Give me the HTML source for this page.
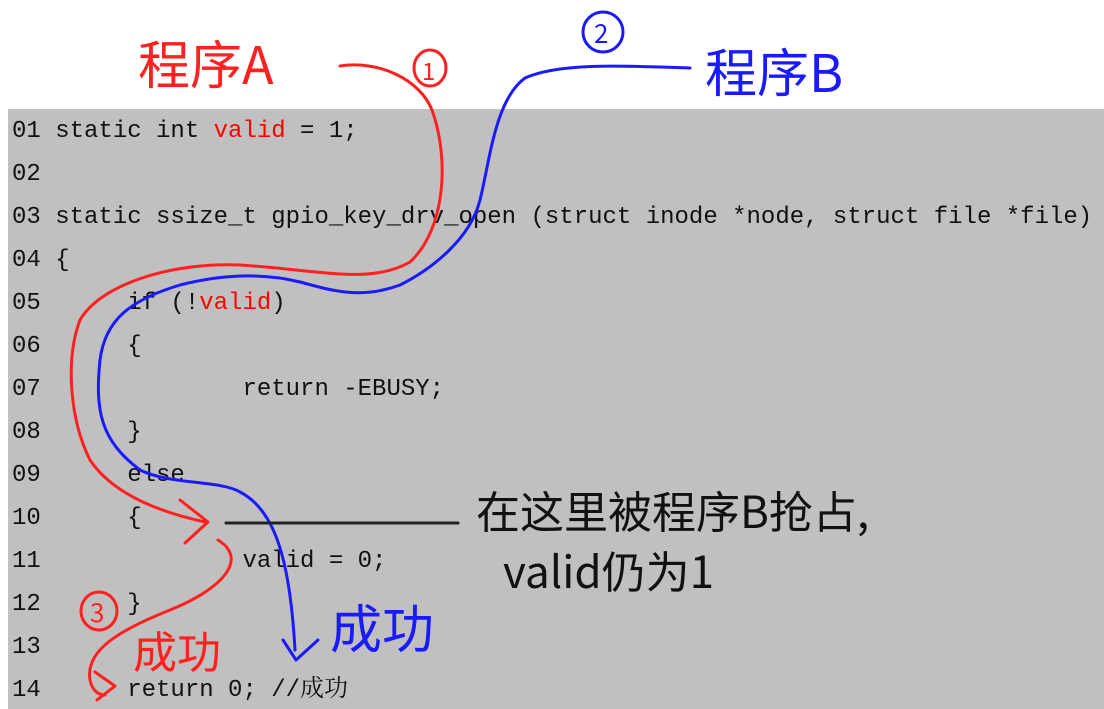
<!DOCTYPE html>
<html><head><meta charset="utf-8"><style>
html,body{margin:0;padding:0;background:#fff;width:1104px;height:709px;overflow:hidden;position:relative}
#box{position:absolute;left:8px;top:109px;width:1096px;height:600px;background:#c0c0c0}
.l{position:absolute;left:12px;font-family:"Liberation Mono","Noto Serif CJK SC",monospace;font-size:24px;color:#111;white-space:pre;line-height:28px}
.r{color:#f00}
svg{position:absolute;left:0;top:0}
</style></head><body>
<div id="box"></div>
<div class="l" style="top:118px">01 static int <span class="r">valid</span> = 1;</div>
<div class="l" style="top:161px">02</div>
<div class="l" style="top:204px">03 static ssize_t gpio_key_drv_open (struct inode *node, struct file *file)</div>
<div class="l" style="top:247px">04 {</div>
<div class="l" style="top:290px">05      if (!<span class="r">valid</span>)</div>
<div class="l" style="top:333px">06      {</div>
<div class="l" style="top:376px">07              return -EBUSY;</div>
<div class="l" style="top:419px">08      }</div>
<div class="l" style="top:462px">09      else</div>
<div class="l" style="top:505px">10      {</div>
<div class="l" style="top:548px">11              valid = 0;</div>
<div class="l" style="top:591px">12      }</div>
<div class="l" style="top:634px">13</div>
<div class="l" style="top:677px">14      return 0; //成功</div>
<svg width="1104" height="709" viewBox="0 0 1104 709" fill="none" stroke-linecap="round" stroke-linejoin="round">
<g stroke="#ff2020" stroke-width="3">
<path d="M340 66 C380 60 420 80 432 110 C450 160 445 230 410 262 C370 285 320 270 240 265 C170 262 100 285 80 320 C65 360 70 420 90 460 C110 490 150 510 205 522"/>
<path d="M180 500 L208 522 L185 543"/>
<path d="M218 540 C250 560 220 590 170 610 C120 630 85 650 90 680 C92 690 98 695 105 695"/>
<path d="M95 672 L115 686 L97 700"/>
<ellipse cx="430" cy="68" rx="16" ry="18"/>
<ellipse cx="99" cy="611" rx="18" ry="19"/>
</g>
<g stroke="#1a1aff" stroke-width="3">
<path d="M690 68 C630 66 560 62 525 78 C495 100 490 160 480 200 C470 240 430 270 400 285 C360 300 330 290 300 282 C260 272 220 275 180 285 C130 300 105 320 100 360 C95 410 100 440 140 470 C170 485 220 480 240 492 C275 510 290 560 295 650"/>
<path d="M283 640 L296 660 L318 640"/>
<ellipse cx="603" cy="32" rx="20" ry="20"/>
</g>
<path d="M226 523 L458 523" stroke="#222" stroke-width="3"/>
<g font-family="'WenQuanYi Zen Hei','Noto Sans CJK SC',sans-serif" stroke="none">
<text x="138" y="84" font-size="52" fill="#ff2020">程序A</text>
<text x="422" y="80" font-size="24" fill="#ff2020">1</text>
<text x="594" y="43" font-size="26" fill="#1a1aff">2</text>
<text x="90" y="622" font-size="26" fill="#ff2020">3</text>
<text x="705" y="92" font-size="52" fill="#1a1aff">程序B</text>
<text x="476" y="528" font-size="44" fill="#111">在这里被程序B抢占,</text>
<text x="503" y="588" font-size="44" fill="#111">valid仍为1</text>
<text x="330" y="648" font-size="52" fill="#1a1aff">成功</text>
<text x="133" y="668" font-size="44" fill="#ff2020">成功</text>
</g>
</svg>
</body></html>
